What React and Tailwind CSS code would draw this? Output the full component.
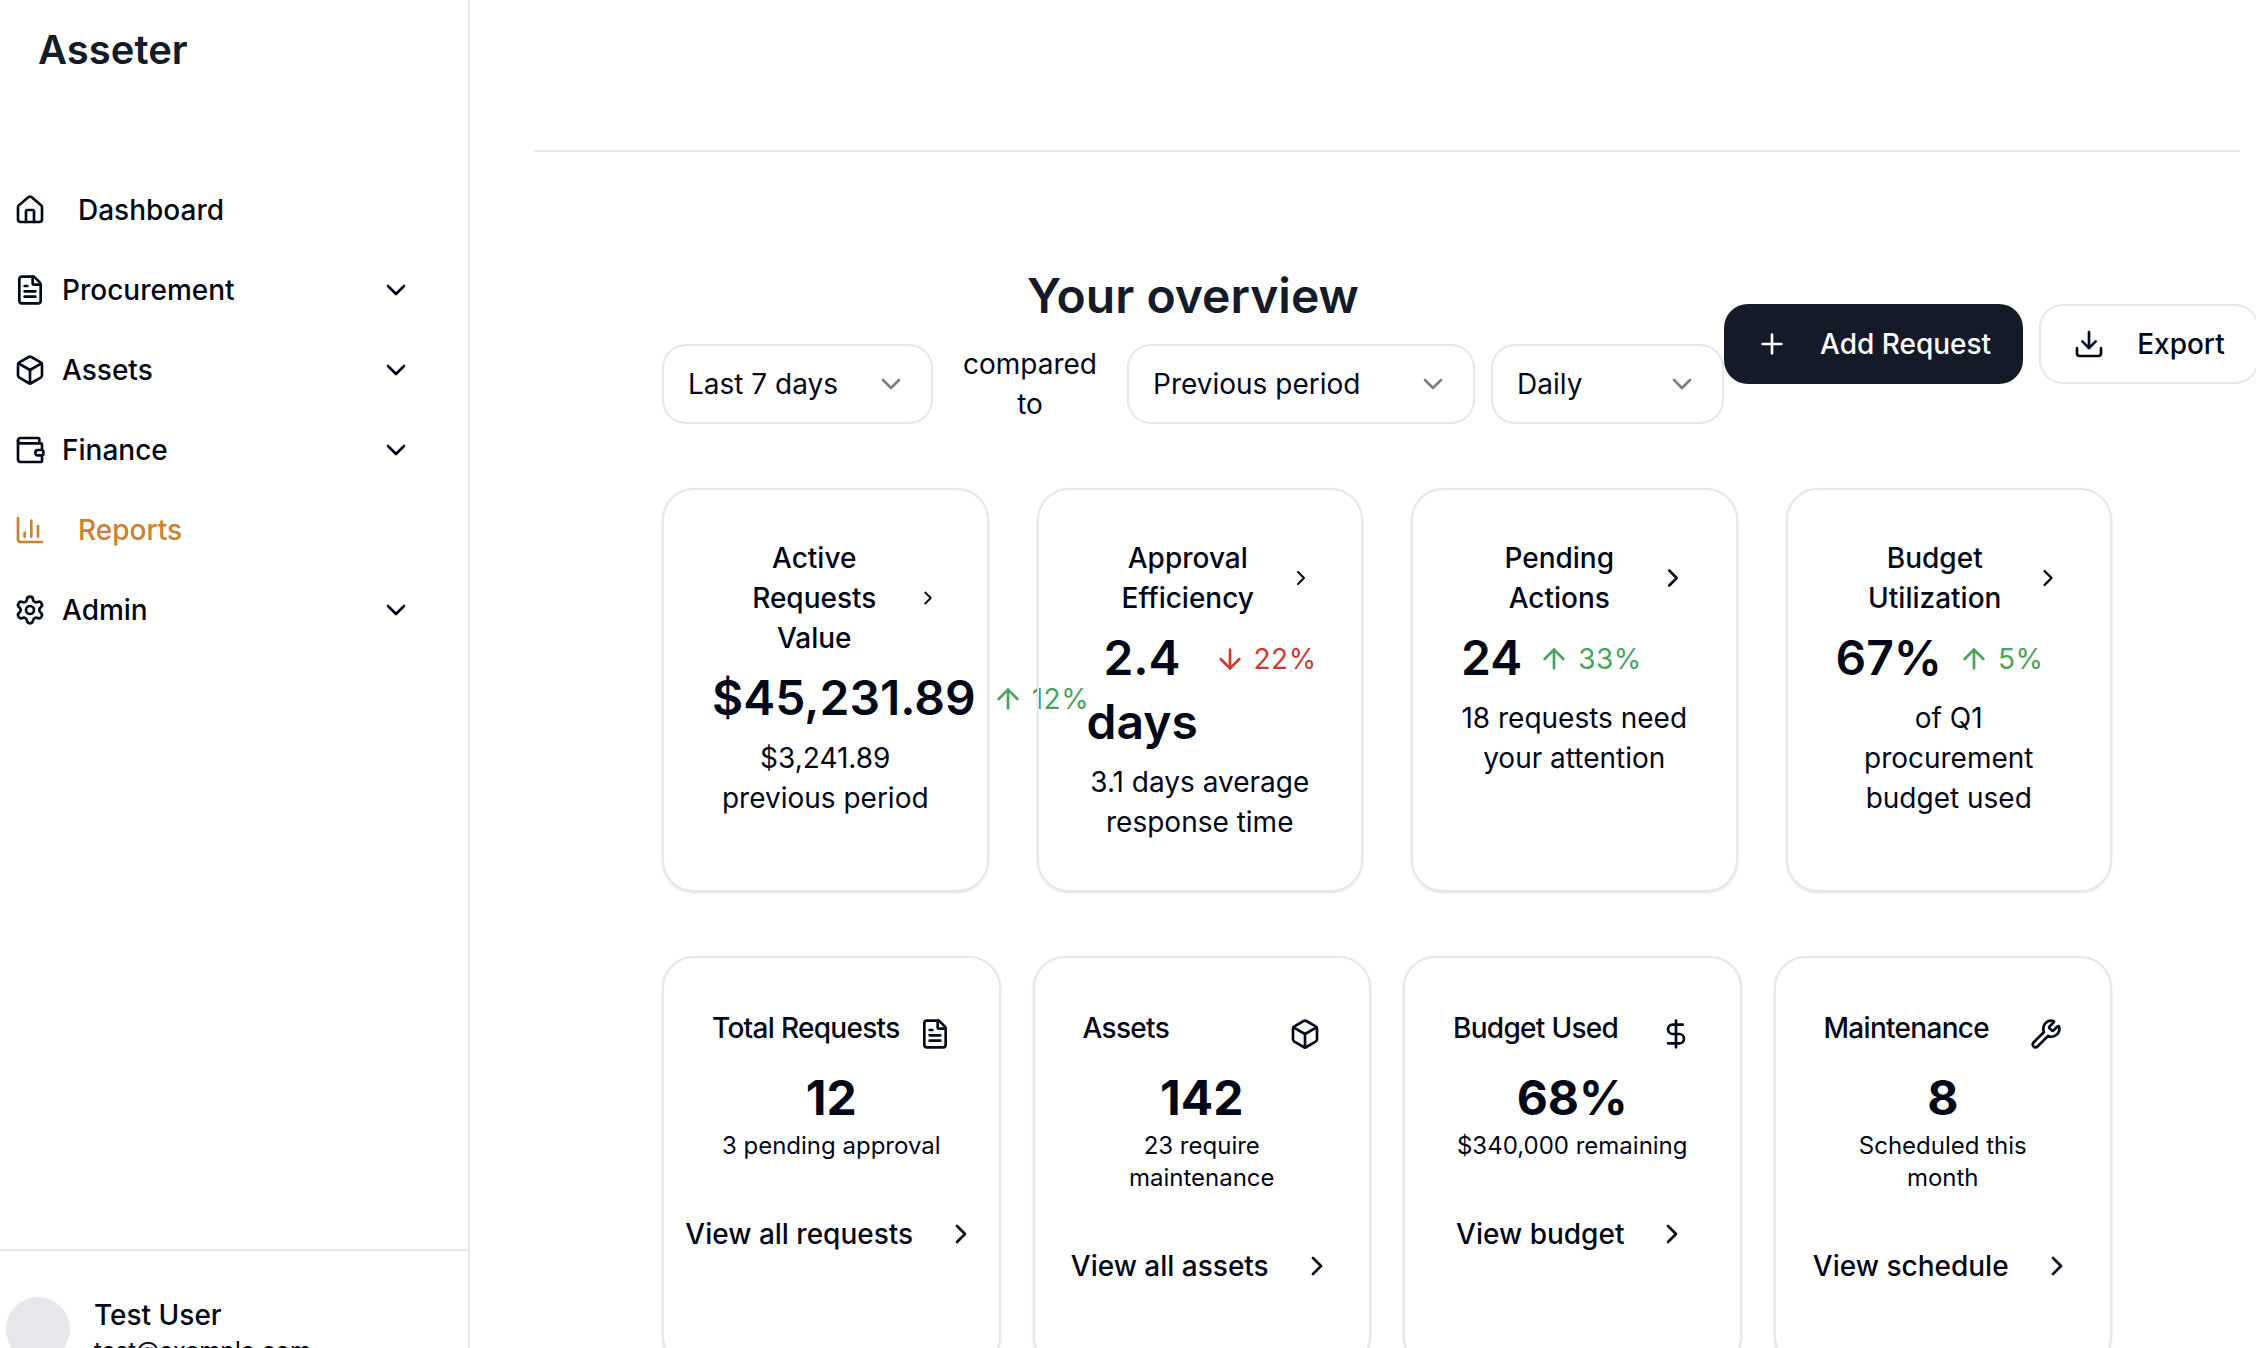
import React from "react";
import {
  House,
  FileText,
  Box,
  Wallet,
  ChartColumn,
  Settings,
  ChevronDown,
  ChevronRight,
  Plus,
  Download,
  ArrowUp,
  ArrowDown,
  DollarSign,
  Wrench,
} from "lucide-react";

const navItems = [
  { label: "Dashboard", icon: House },
  { label: "Procurement", icon: FileText, sub: true },
  { label: "Assets", icon: Box, sub: true },
  { label: "Finance", icon: Wallet, sub: true },
  { label: "Reports", icon: ChartColumn, active: true },
  { label: "Admin", icon: Settings, sub: true },
];

const metrics = [
  { title: "Active Requests Value", value: "$45,231.89", change: "12%", up: true, note: "$3,241.89 previous period", chevron: "w-[22px] h-8" },
  { title: "Approval Efficiency", value: "2.4 days", change: "22%", up: false, note: "3.1 days average response time", chevron: "w-6 h-8" },
  { title: "Pending Actions", value: "24", change: "33%", up: true, note: "18 requests need your attention", chevron: "w-[30px] h-8" },
  { title: "Budget Utilization", value: "67%", change: "5%", up: true, note: "of Q1 procurement budget used", chevron: "w-[28px] h-8" },
];

const summaries = [
  { title: "Total Requests", icon: FileText, value: "12", note: "3 pending approval", link: "View all requests" },
  { title: "Assets", icon: Box, value: "142", note: "23 require maintenance", link: "View all assets" },
  { title: "Budget Used", icon: DollarSign, value: "68%", note: "$340,000 remaining", link: "View budget" },
  { title: "Maintenance", icon: Wrench, value: "8", note: "Scheduled this month", link: "View schedule" },
];

function Sidebar() {
  return (
    <aside className="w-[470px] h-screen shrink-0 flex flex-col border-r-2 border-[#e2e8f0] overflow-hidden">
      <div className="h-[100px] pl-[38px] pt-[22px] text-[40px] leading-[56px] font-semibold text-[#151b28]">
        Asseter
      </div>

      <nav className="flex-1 pt-[70px] pl-[14px] pr-[56px]">
        {navItems.map((item) => (
          <div
            key={item.label}
            className={`h-20 flex items-center text-[28px] leading-10 font-medium ${
              item.active ? "text-[#cd7f32]" : "text-[#020817]"
            }`}
          >
            <item.icon className="w-8 h-8 shrink-0" />
            <span className={item.sub ? "ml-4" : "ml-8"}>{item.label}</span>
            {item.sub && <ChevronDown className="w-8 h-8 ml-auto" />}
          </div>
        ))}
      </nav>

      <div className="h-[99px] shrink-0 border-t-2 border-[#e2e8f0] pt-[44px] pl-[6px] flex gap-6">
        <div className="w-16 h-16 mt-[2px] shrink-0 rounded-full bg-[#e5e7eb]"></div>
        <div>
          <p className="text-[28px] leading-10 font-medium">Test User</p>
          <p className="text-2xl leading-8">test@example.com</p>
        </div>
      </div>
    </aside>
  );
}

function Select({ label, width }) {
  return (
    <div
      className={`${width} h-20 shrink-0 flex items-center justify-between px-6 bg-white border-2 border-[#e2e8f0] rounded-3xl`}
    >
      <span>{label}</span>
      <ChevronDown className="w-8 h-8 text-[#7c808a]" />
    </div>
  );
}

function MetricCard({ item }) {
  const Arrow = item.up ? ArrowUp : ArrowDown;
  return (
    <div className="border-2 border-[#e2e8f0] rounded-[32px] shadow-sm p-12 flex flex-col gap-2">
      <div className="flex items-center">
        <h3 className="flex-1 text-center text-[28px] leading-10 font-medium">{item.title}</h3>
        <ChevronRight className={`${item.chevron} shrink-0`} />
      </div>

      <div className="flex items-start gap-4">
        <span className="text-center text-5xl leading-16 font-semibold shrink-0">
          {item.value === "2.4 days" ? (
            <span className="block w-[111px]">{item.value}</span>
          ) : (
            item.value
          )}
        </span>
        <span
          className={`h-16 pt-[2px] flex items-center gap-2 text-[28px] leading-10 tracking-[0.5px] shrink-0 ${
            item.up ? "text-[#4aa35c]" : "text-[#cc3b33]"
          }`}
        >
          <Arrow className="w-8 h-8" />
          {item.change}
        </span>
      </div>

      <p className="text-center text-[28px] leading-10">{item.note}</p>
    </div>
  );
}

function SummaryCard({ item }) {
  return (
    <div className="bg-white border-2 border-[#e2e8f0] rounded-[32px] shadow-sm pt-[50px] px-12 pb-20">
      <div className="flex justify-between">
        <h3 className="text-[28px] leading-10 font-medium tracking-tight">{item.title}</h3>
        <item.icon className="w-8 h-8 mt-[10px] shrink-0" />
      </div>

      <p className="mt-4 text-center text-5xl leading-16 font-bold">{item.value}</p>
      <p className="text-center text-2xl leading-8">{item.note}</p>

      <div className="mt-[52px] -mx-8 flex items-center justify-center gap-8 text-[28px] leading-10 font-medium">
        <span className="whitespace-nowrap">{item.link}</span>
        <ChevronRight className="w-8 h-8 shrink-0" />
      </div>
    </div>
  );
}

export default function App() {
  return (
    <div className="h-screen flex overflow-hidden bg-white text-[#020817] font-[Inter,sans-serif]">
      <Sidebar />

      <main className="flex-1 min-w-0 overflow-hidden pl-16 pr-4">
        <div className="h-[152px] border-b-2 border-[#e2e8f0]"></div>

        <div className="px-32 pt-28">
          {/* Heading, filters and actions */}
          <div className="flex items-center">
            <div className="w-[1062px] shrink-0">
              <h1 className="text-center text-5xl leading-16 font-semibold text-[#151b28]">Your overview</h1>
              <div className="mt-4 flex gap-4 text-[28px] leading-10">
                <Select label="Last 7 days" width="w-[271px]" />
                <span className="w-[162px] shrink-0 text-center">compared to</span>
                <Select label="Previous period" width="w-[348px]" />
                <Select label="Daily" width="w-[233px]" />
              </div>
            </div>

            <div className="flex gap-4 shrink-0 text-[28px] leading-10 font-medium">
              <button className="h-20 px-8 flex items-center gap-8 rounded-3xl bg-[#141a28] text-white">
                <Plus className="w-8 h-8" />
                Add Request
              </button>
              <button className="h-20 px-8 flex items-center gap-8 rounded-3xl bg-white border-2 border-[#e2e8f0]">
                <Download className="w-8 h-8" />
                Export
              </button>
            </div>
          </div>

          {/* Metric cards */}
          <div className="mt-16 grid grid-cols-4 gap-12">
            {metrics.map((item) => (
              <MetricCard key={item.title} item={item} />
            ))}
          </div>

          {/* Summary cards */}
          <div className="mt-16 grid grid-cols-4 gap-8">
            {summaries.map((item) => (
              <SummaryCard key={item.title} item={item} />
            ))}
          </div>
        </div>
      </main>
    </div>
  );
}
